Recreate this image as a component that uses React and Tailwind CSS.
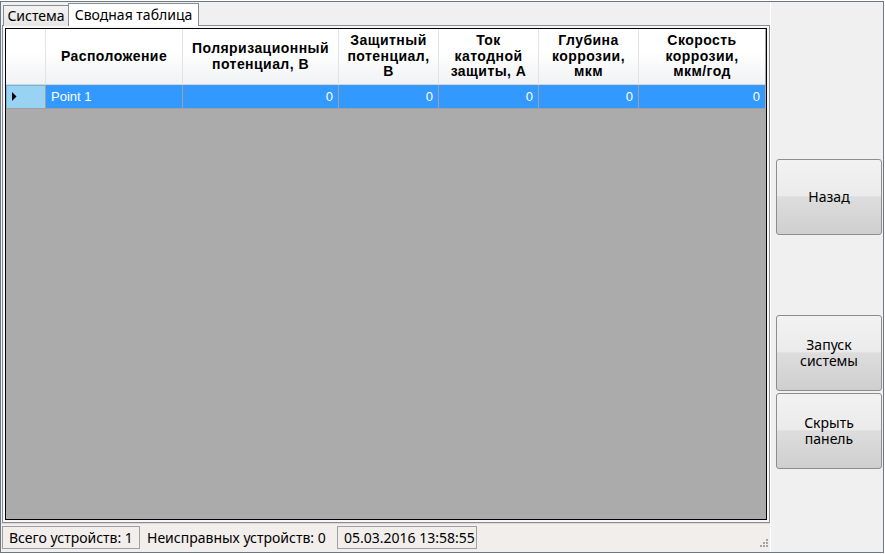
const UI_FONT = "font-['Noto_Sans','Open_Sans',sans-serif]";
const GRID_FONT = "font-['Liberation_Sans',Arial,sans-serif]";

const columns = [
  { lines: ["Расположение"], value: "Point 1", align: "left" },
  { lines: ["Поляризационный", "потенциал, В"], value: "0", align: "right" },
  { lines: ["Защитный", "потенциал,", "В"], value: "0", align: "right" },
  { lines: ["Ток", "катодной", "защиты, А"], value: "0", align: "right" },
  { lines: ["Глубина", "коррозии,", "мкм"], value: "0", align: "right" },
  { lines: ["Скорость", "коррозии,", "мкм/год"], value: "0", align: "right" },
];

function HeaderCell({ lines, last }) {
  return (
    <div
      className={`flex h-[56px] flex-col items-center justify-center border-b border-[#d5d5d5] bg-gradient-to-b from-white from-40% to-[#f1f2f4] text-center text-[14px] font-bold leading-[15.5px] tracking-[0.45px] text-black ${
        last ? "" : "border-r border-r-[#e2e3e5]"
      }`}
    >
      {lines.map((l) => (
        <span key={l} className="whitespace-nowrap">
          {l}
        </span>
      ))}
    </div>
  );
}

function DataCell({ value, align, last }) {
  return (
    <div
      className={`flex h-[24px] items-center border-b border-[#a0a0a0] bg-[#3399ff] text-[13px] text-white ${
        align === "right" ? "justify-end pr-[5px]" : "justify-start pl-[5px]"
      } ${last ? "" : "border-r border-r-[#a0a0a0]"}`}
    >
      {value}
    </div>
  );
}

function Button({ children, className = "" }) {
  return (
    <button
      className={`flex h-[76px] w-[106px] items-center justify-center rounded-[3px] border border-[#8d8d8d] bg-[linear-gradient(to_bottom,#f2f2f2_0%,#ebebeb_48%,#dddddd_50%,#cfcfcf_100%)] text-center text-[14px] leading-[16px] text-black ${className}`}
    >
      <span>{children}</span>
    </button>
  );
}

function Grip() {
  const dots = [
    [8, 0],
    [5, 3],
    [8, 3],
    [2, 6],
    [5, 6],
    [8, 6],
  ];
  return (
    <svg width="11" height="9" viewBox="0 0 11 9" className="mr-[1px] mt-[13px]">
      {dots.map(([x, y]) => (
        <rect key={`${x}-${y}`} x={x} y={y} width="2" height="2" fill="#a4a4a4" />
      ))}
    </svg>
  );
}

export default function App() {
  return (
    <div className={`h-[554px] w-[885px] bg-white pt-px ${UI_FONT}`}>
      <div className="flex h-[552px] w-[884px] border border-[#6b7886] bg-[#f0f0f0]">
        {/* left side: tabs + status */}
        <div className="flex w-[769px] flex-col">
          <div className="ml-[1px] flex h-[521px] w-[768px] flex-col">
            <div className="relative z-10 flex h-[23px] items-end pl-[1px]">
              <div className="mb-[-1px] flex h-[21px] w-[66px] items-center justify-center border border-b-0 border-[#898c95] bg-gradient-to-b from-[#f3f3f3] to-[#e6e6e6] text-[14px] leading-none text-black">
                Система
              </div>
              <div className="-ml-px mb-[-1px] flex h-[23px] w-[131px] items-start justify-center border border-b-0 border-[#898c95] bg-white pt-[2px] text-[14px] leading-[17px] text-black">
                Сводная таблица
              </div>
            </div>
            <div className="flex-1 border border-[#898c95] bg-[#f7f7f7] p-[2px]">
              <div className={`h-full border border-black bg-[#ababab] ${GRID_FONT}`}>
                <div className="grid grid-cols-[40px_137px_156px_100px_100px_100px_126px]">
                  <div className="h-[56px] border-b border-r border-[#d5d5d5] border-r-[#e2e3e5] bg-gradient-to-b from-white from-40% to-[#f1f2f4]" />
                  {columns.map((c, i) => (
                    <HeaderCell key={i} lines={c.lines} last={i === columns.length - 1} />
                  ))}
                  <div className="flex h-[24px] items-center border-b border-r border-[#a0a0a0] bg-[#99d3f4] pl-[6px] shadow-[inset_1px_1px_0_#6fb4de]">
                    <svg width="5" height="9" viewBox="0 0 5 9">
                      <path d="M0 0 L4.5 4.5 L0 9 Z" fill="#000" />
                    </svg>
                  </div>
                  {columns.map((c, i) => (
                    <DataCell key={i} value={c.value} align={c.align} last={i === columns.length - 1} />
                  ))}
                </div>
              </div>
            </div>
          </div>
          <div className="flex flex-1 items-start border-t border-[#d9d9d9] bg-[#f1eeec] pt-[2px] text-[14px] leading-none text-black">
            <div className="ml-[1px] flex h-[23px] w-[138px] items-center border border-[#a0a0a0] pl-[6px]">
              Всего устройств: 1
            </div>
            <div className="flex h-[23px] w-[197px] items-center pl-[7px]">Неисправных устройств: 0</div>
            <div className="flex h-[23px] w-[140px] items-center border border-[#a0a0a0] pl-[6px]">
              05.03.2016 13:58:55
            </div>
            <div className="ml-auto">
              <Grip />
            </div>
          </div>
        </div>
        {/* right side: buttons */}
        <div className="flex flex-1 flex-col border-l border-white pl-[5px]">
          <Button className="mt-[157px]">Назад</Button>
          <Button className="mt-[80px]">
            Запуск
            <br />
            системы
          </Button>
          <Button className="mt-[2px]">
            Скрыть
            <br />
            панель
          </Button>
        </div>
      </div>
    </div>
  );
}
